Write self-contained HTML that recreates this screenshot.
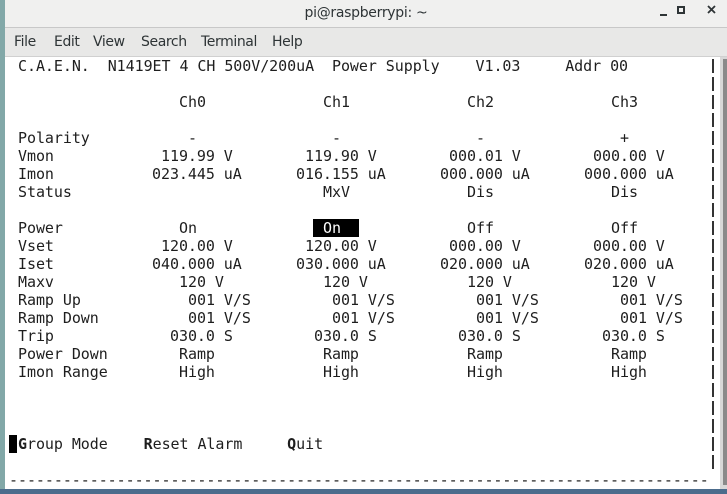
<!DOCTYPE html>
<html><head><meta charset="utf-8"><style>
*{margin:0;padding:0}
body{width:727px;height:494px;overflow:hidden;background:#4c6c8c;position:relative;font-family:"DejaVu Sans Mono","Liberation Mono",monospace}
#win{position:absolute;left:0;top:0;width:727px;height:489px;background:#fff}
#lb{position:absolute;left:0;top:0;width:5px;height:489px;background:#82a8a8}
#title{position:absolute;left:5px;top:0;width:722px;height:27px;background:#f0f0ef;border-bottom:1px solid #c8c8c8;font-family:"DejaVu Sans","Liberation Sans",sans-serif;font-size:14px;color:#2e3436}
#menu{position:absolute;left:5px;top:28px;width:722px;height:28px;background:#e8e8e7;border-bottom:1px solid #d0d0d0;font-family:"DejaVu Sans","Liberation Sans",sans-serif;font-size:14px;color:#2e3436}
.m{position:absolute;top:6px;letter-spacing:-0.4px}
#sb{position:absolute;left:720px;top:57px;width:7px;height:432px;background:#d8d8d8}
#th{position:absolute;left:723px;top:59px;width:4px;height:426px;background:#8a8a8a}
.t{position:absolute;font-size:15px;line-height:18px;height:18px;white-space:pre;color:#1e1e1e;letter-spacing:-0.06px}
.v{position:absolute;left:712px;width:2px;height:14px;background:#333}
</style></head><body>
<div id="win"></div>
<div id="lb"></div>
<div id="title">
<div style="position:absolute;left:0;width:722px;top:5px;text-align:center;letter-spacing:-0.3px">pi@raspberrypi: ~</div>
<div style="position:absolute;left:655px;top:14px;width:7px;height:2px;background:#2e3436"></div>
<div style="position:absolute;left:672px;top:6px;width:4px;height:4px;border:2px solid #2e3436"></div>
<svg style="position:absolute;left:702px;top:5px" width="9" height="9" viewBox="0 0 9 9"><path d="M1 1L8 8M8 1L1 8" stroke="#2e3436" stroke-width="1.8"/></svg>
</div>
<div id="menu">
<span class="m" style="left:9px">File</span>
<span class="m" style="left:49px">Edit</span>
<span class="m" style="left:88px">View</span>
<span class="m" style="left:136px">Search</span>
<span class="m" style="left:196px">Terminal</span>
<span class="m" style="left:267px">Help</span>
</div>
<div id="sb"></div><div id="th"></div>

<div class="t" style="left:18px;top:57px">C.A.E.N.  N1419ET 4 CH 500V/200uA  Power Supply    V1.03     Addr 00</div>

<div class="t" style="left:179px;top:93px">Ch0</div>
<div class="t" style="left:323px;top:93px">Ch1</div>
<div class="t" style="left:467px;top:93px">Ch2</div>
<div class="t" style="left:611px;top:93px">Ch3</div>

<div class="t" style="left:18px;top:129px">Polarity</div>
<div class="t" style="left:188px;top:129px">-</div><div class="t" style="left:332px;top:129px">-</div><div class="t" style="left:476px;top:129px">-</div><div class="t" style="left:620px;top:129px">+</div>

<div class="t" style="left:18px;top:147px">Vmon</div>
<div class="t" style="left:161px;top:147px">119.99 V</div><div class="t" style="left:305px;top:147px">119.90 V</div><div class="t" style="left:449px;top:147px">000.01 V</div><div class="t" style="left:593px;top:147px">000.00 V</div>

<div class="t" style="left:18px;top:165px">Imon</div>
<div class="t" style="left:152px;top:165px">023.445 uA</div><div class="t" style="left:296px;top:165px">016.155 uA</div><div class="t" style="left:440px;top:165px">000.000 uA</div><div class="t" style="left:584px;top:165px">000.000 uA</div>

<div class="t" style="left:18px;top:183px">Status</div>
<div class="t" style="left:323px;top:183px">MxV</div><div class="t" style="left:467px;top:183px">Dis</div><div class="t" style="left:611px;top:183px">Dis</div>

<div class="t" style="left:18px;top:219px">Power</div>
<div class="t" style="left:179px;top:219px">On</div>
<div style="position:absolute;left:313px;top:219px;width:46px;height:18px;background:#000"></div>
<div class="t" style="left:323px;top:219px;color:#fff">On</div>
<div class="t" style="left:467px;top:219px">Off</div><div class="t" style="left:611px;top:219px">Off</div>

<div class="t" style="left:18px;top:237px">Vset</div>
<div class="t" style="left:161px;top:237px">120.00 V</div><div class="t" style="left:305px;top:237px">120.00 V</div><div class="t" style="left:449px;top:237px">000.00 V</div><div class="t" style="left:593px;top:237px">000.00 V</div>

<div class="t" style="left:18px;top:255px">Iset</div>
<div class="t" style="left:152px;top:255px">040.000 uA</div><div class="t" style="left:296px;top:255px">030.000 uA</div><div class="t" style="left:440px;top:255px">020.000 uA</div><div class="t" style="left:584px;top:255px">020.000 uA</div>

<div class="t" style="left:18px;top:273px">Maxv</div>
<div class="t" style="left:179px;top:273px">120 V</div><div class="t" style="left:323px;top:273px">120 V</div><div class="t" style="left:467px;top:273px">120 V</div><div class="t" style="left:611px;top:273px">120 V</div>

<div class="t" style="left:18px;top:291px">Ramp Up</div>
<div class="t" style="left:188px;top:291px">001 V/S</div><div class="t" style="left:332px;top:291px">001 V/S</div><div class="t" style="left:476px;top:291px">001 V/S</div><div class="t" style="left:620px;top:291px">001 V/S</div>

<div class="t" style="left:18px;top:309px">Ramp Down</div>
<div class="t" style="left:188px;top:309px">001 V/S</div><div class="t" style="left:332px;top:309px">001 V/S</div><div class="t" style="left:476px;top:309px">001 V/S</div><div class="t" style="left:620px;top:309px">001 V/S</div>

<div class="t" style="left:18px;top:327px">Trip</div>
<div class="t" style="left:170px;top:327px">030.0 S</div><div class="t" style="left:314px;top:327px">030.0 S</div><div class="t" style="left:458px;top:327px">030.0 S</div><div class="t" style="left:602px;top:327px">030.0 S</div>

<div class="t" style="left:18px;top:345px">Power Down</div>
<div class="t" style="left:179px;top:345px">Ramp</div><div class="t" style="left:323px;top:345px">Ramp</div><div class="t" style="left:467px;top:345px">Ramp</div><div class="t" style="left:611px;top:345px">Ramp</div>

<div class="t" style="left:18px;top:363px">Imon Range</div>
<div class="t" style="left:179px;top:363px">High</div><div class="t" style="left:323px;top:363px">High</div><div class="t" style="left:467px;top:363px">High</div><div class="t" style="left:611px;top:363px">High</div>

<div style="position:absolute;left:9px;top:435px;width:8px;height:18px;background:#000"></div>
<div class="t" style="left:18px;top:435px"><b>G</b>roup Mode    <b>R</b>eset Alarm     <b>Q</b>uit</div>

<div class="t" style="left:9px;top:471px">------------------------------------------------------------------------------</div>

<div class="v" style="top:59px"></div><div class="v" style="top:77px"></div><div class="v" style="top:95px"></div><div class="v" style="top:113px"></div><div class="v" style="top:131px"></div><div class="v" style="top:149px"></div><div class="v" style="top:167px"></div><div class="v" style="top:185px"></div><div class="v" style="top:203px"></div><div class="v" style="top:221px"></div><div class="v" style="top:239px"></div><div class="v" style="top:257px"></div><div class="v" style="top:275px"></div><div class="v" style="top:293px"></div><div class="v" style="top:311px"></div><div class="v" style="top:329px"></div><div class="v" style="top:347px"></div><div class="v" style="top:365px"></div><div class="v" style="top:383px"></div><div class="v" style="top:401px"></div><div class="v" style="top:419px"></div><div class="v" style="top:437px"></div><div class="v" style="top:455px"></div>
</body></html>
